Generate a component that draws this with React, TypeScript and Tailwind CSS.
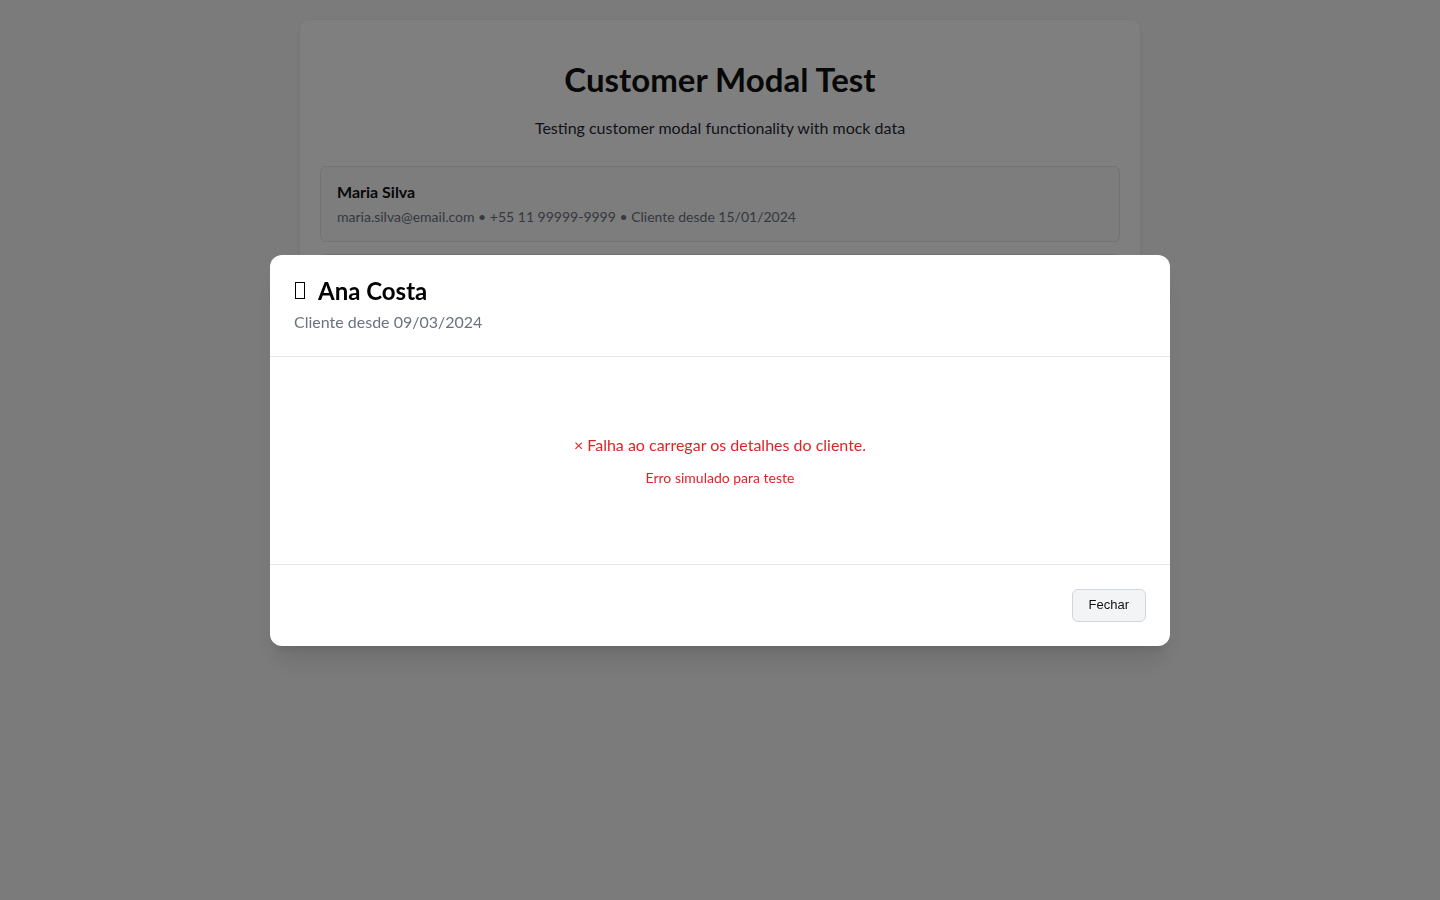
import React from "react";

const font = { fontFamily: "Lato, 'Noto Sans', sans-serif" };

function CustomerRow({ name, email, phone, since }: { name: string; email: string; phone: string; since: string }) {
  return (
    <div className="rounded-md border border-[#e5e7eb] bg-[#fafafa] px-4 pt-[13px] pb-[14px]">
      <div className="text-[16px] font-bold leading-6 text-[#111]">{name}</div>
      <div className="mt-[3px] text-[14px] leading-5 text-[#6b7280]">
        {email} • {phone} • Cliente desde {since}
      </div>
    </div>
  );
}

export default function App() {
  return (
    <div className="relative min-h-[900px] w-full bg-[#f6f6f6]" style={font}>
      <div className="flex justify-center pt-5">
        <div className="w-[840px] rounded-lg bg-white p-5 shadow-sm">
          <h1 className="mt-[19px] text-center text-[33px] font-bold leading-[40px] text-[#111]">Customer Modal Test</h1>
          <p className="mt-[17px] text-center text-[16px] leading-6 text-[#1f2937]">
            Testing customer modal functionality with mock data
          </p>
          <div className="mt-[26px] flex flex-col gap-3">
            <CustomerRow name="Maria Silva" email="maria.silva@email.com" phone="+55 11 99999-9999" since="15/01/2024" />
            <CustomerRow name="João Santos" email="joao.santos@email.com" phone="+55 21 98888-8888" since="22/02/2024" />
            <CustomerRow name="Ana Costa" email="ana.costa@email.com" phone="+55 31 97777-7777" since="09/03/2024" />
          </div>
        </div>
      </div>

      <div className="fixed inset-0 flex items-center justify-center bg-black/50">
        <div className="w-[900px] overflow-hidden rounded-xl bg-white shadow-xl">
          <div className="border-b border-[#e5e7eb] px-6 pt-5 pb-[22px]">
            <div className="flex h-8 items-center text-[24px] font-bold leading-8 text-black">
              <span className="ml-[1px] inline-block h-[17px] w-[10px] border-[1.5px] border-black" />
              <span className="ml-[13px]">Ana Costa</span>
            </div>
            <div className="mt-[3px] text-[16px] leading-6 text-[#6b7280]">Cliente desde 09/03/2024</div>
          </div>
          <div className="flex h-[208px] flex-col items-center justify-center border-b border-[#e5e7eb]">
            <div className="text-[16px] leading-6 text-[#dc2626]">× Falha ao carregar os detalhes do cliente.</div>
            <div className="mt-[11px] text-[14px] leading-5 text-[#dc2626]">Erro simulado para teste</div>
          </div>
          <div className="flex justify-end px-6 py-6">
            <button
              className="h-[33px] rounded-md border border-[#d1d5db] bg-[#f3f4f6] px-4 text-[13px] text-[#111]"
              style={{ fontFamily: "'Liberation Sans', Arial, sans-serif" }}
            >
              Fechar
            </button>
          </div>
        </div>
      </div>
    </div>
  );
}
